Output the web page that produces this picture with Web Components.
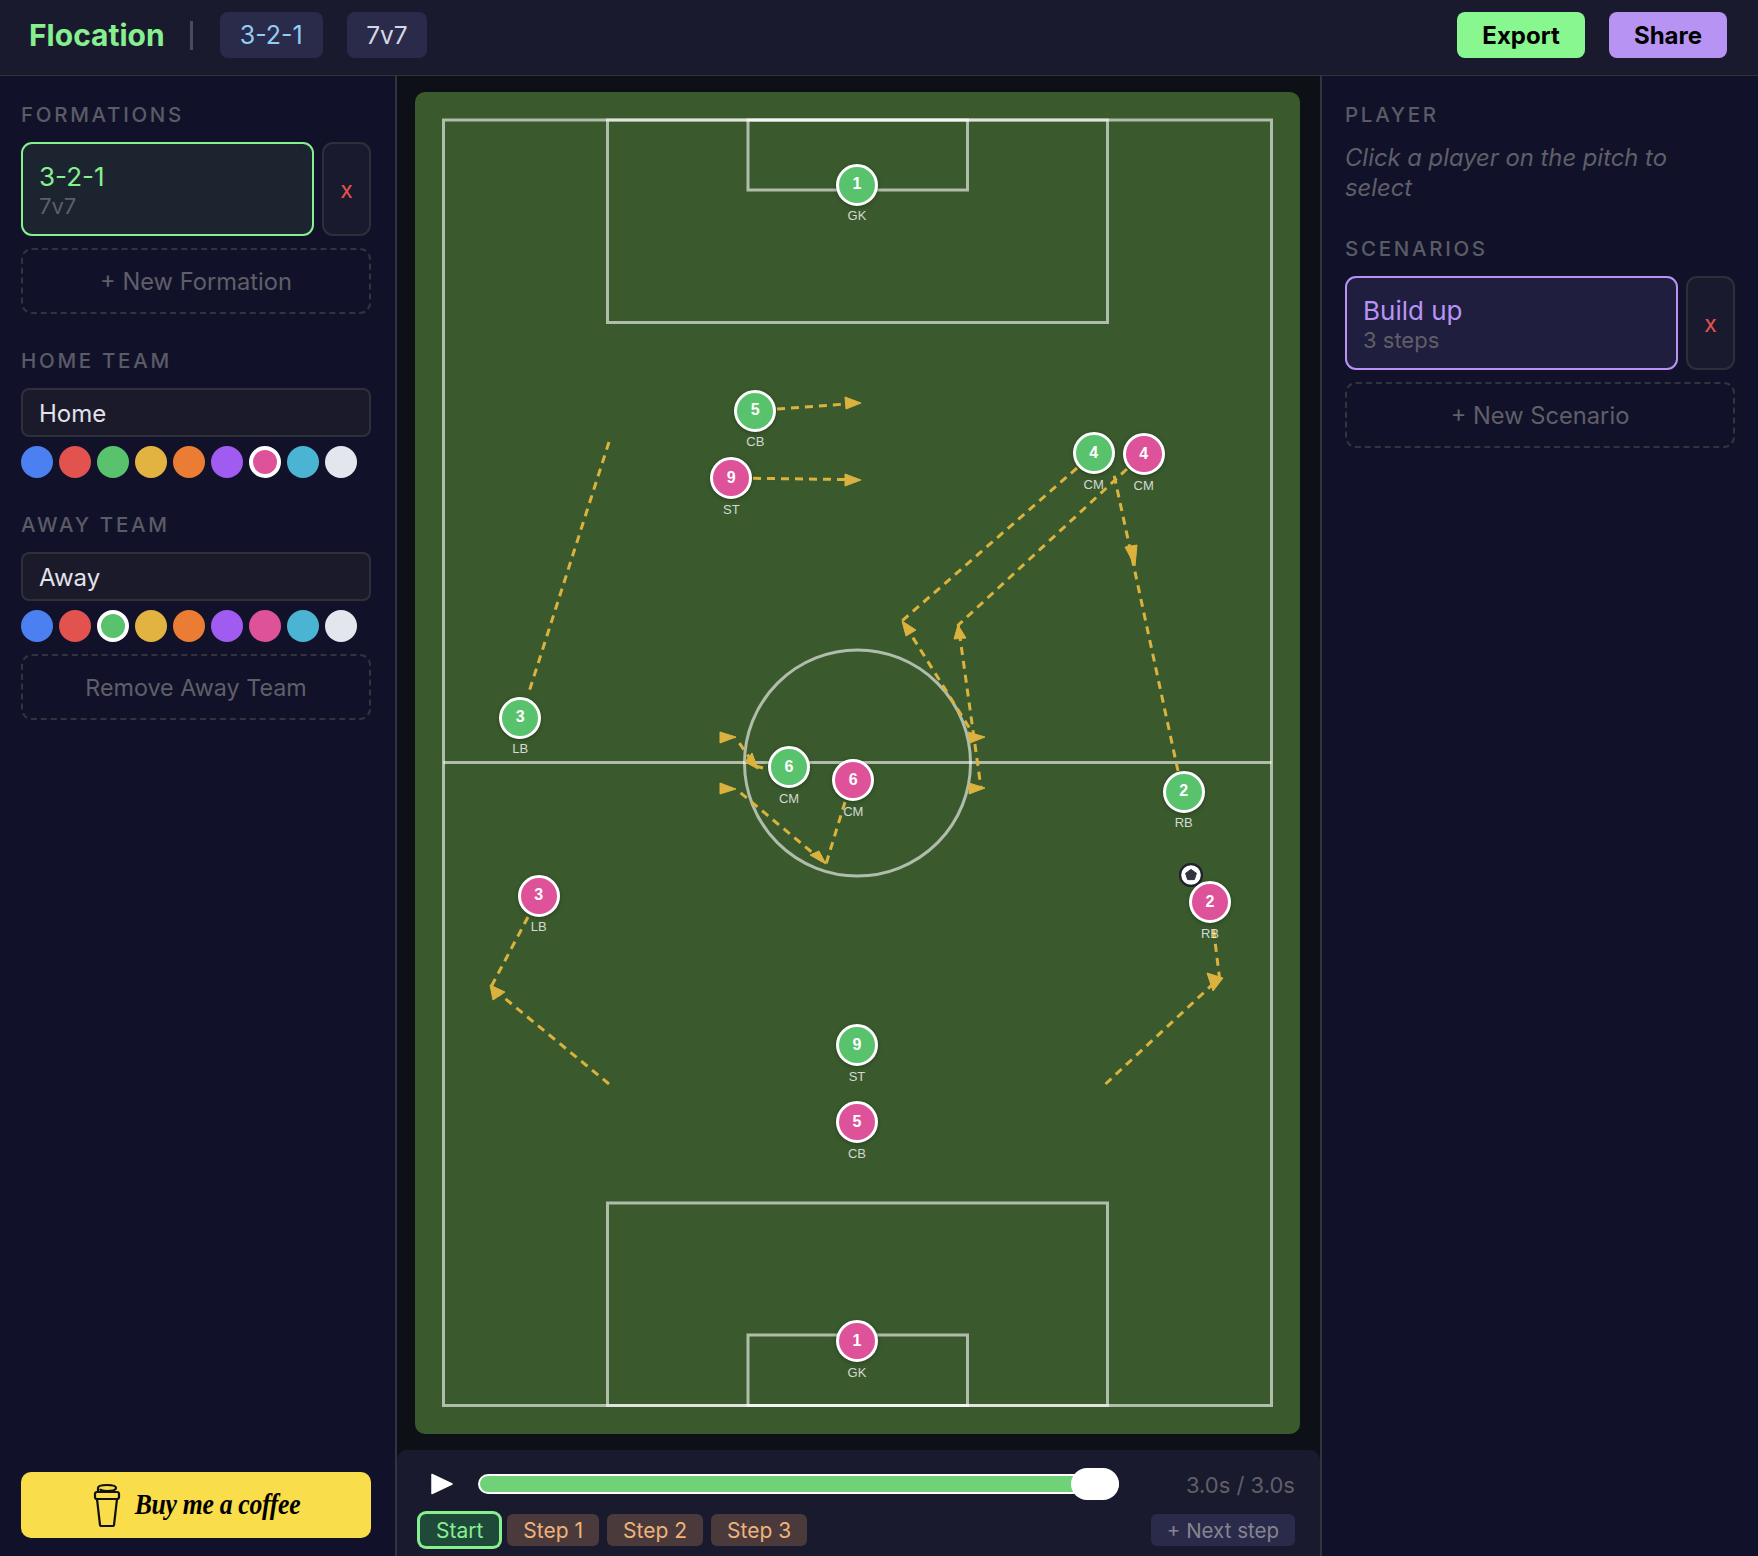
<!DOCTYPE html>
<html>
<head>
<meta charset="utf-8">
<title>Flocation</title>
<style>
  html, body { margin: 0; height: 100%; background: #0d1117; }
  body { font-family: Inter, "Liberation Sans", sans-serif; color: #e2e8f0; }
  fl-app { height: 1556px; }
  .m16 { margin-bottom: 16px; }
  .m12 { margin-bottom: 12px; }
  .m9 { margin-bottom: 9px; }
  .gap { margin-top: 36px; }
</style>
</head>
<body>
<fl-app>
  <fl-header slot="header"></fl-header>

  <fl-panel slot="left">
    <fl-label class="m16">Formations</fl-label>
    <fl-card class="m12" name="3-2-1" sub="7v7" tone="green"></fl-card>
    <fl-dashed>+ New Formation</fl-dashed>

    <fl-label class="m16 gap">Home Team</fl-label>
    <fl-name class="m9">Home</fl-name>
    <fl-swatches selected="6"></fl-swatches>

    <fl-label class="m16 gap">Away Team</fl-label>
    <fl-name class="m9">Away</fl-name>
    <fl-swatches class="m12" selected="2"></fl-swatches>
    <fl-dashed style="font-size:23.3px">Remove Away Team</fl-dashed>

    <fl-coffee></fl-coffee>
  </fl-panel>

  <fl-stage slot="center">
    <fl-pitch>
      <fl-player x="857" y="184.5" num="1" pos="GK" team="home"></fl-player>
      <fl-player x="755.3" y="410.7" num="5" pos="CB" team="home"></fl-player>
      <fl-player x="1093.7" y="453.3" num="4" pos="CM" team="home"></fl-player>
      <fl-player x="520.3" y="717.6" num="3" pos="LB" team="home"></fl-player>
      <fl-player x="789" y="767" num="6" pos="CM" team="home"></fl-player>
      <fl-player x="1183.7" y="791.7" num="2" pos="RB" team="home"></fl-player>
      <fl-player x="857" y="1045" num="9" pos="ST" team="home"></fl-player>
      <fl-ball x="1191.3" y="875"></fl-ball>
      <fl-player x="857" y="1341" num="1" pos="GK" team="away"></fl-player>
      <fl-player x="857" y="1122.3" num="5" pos="CB" team="away"></fl-player>
      <fl-player x="731.3" y="478" num="9" pos="ST" team="away"></fl-player>
      <fl-player x="1143.7" y="454.3" num="4" pos="CM" team="away"></fl-player>
      <fl-player x="538.7" y="895.8" num="3" pos="LB" team="away"></fl-player>
      <fl-player x="853.3" y="780.3" num="6" pos="CM" team="away"></fl-player>
      <fl-player x="1210" y="902.3" num="2" pos="RB" team="away"></fl-player>
    </fl-pitch>
    <fl-controls></fl-controls>
  </fl-stage>

  <fl-panel slot="right" side="right">
    <fl-label>Player</fl-label>
    <fl-hint>Click a player on the pitch to select</fl-hint>
    <fl-label class="m16">Scenarios</fl-label>
    <fl-card class="m12" name="Build up" sub="3 steps" tone="purple"></fl-card>
    <fl-dashed>+ New Scenario</fl-dashed>
  </fl-panel>
</fl-app>

<script>
// the whole page grid: header on top, then three columns
class FlApp extends HTMLElement {
  constructor() {
    super();
    this.attachShadow({ mode: "open" });
    this.shadowRoot.innerHTML = `
      <style>
        :host { display: grid; grid-template-columns: 397px 1fr 438px; grid-template-rows: 76px 1fr; }
        .top { grid-column: 1 / 4; }
      </style>
      <div class="top"><slot name="header"></slot></div>
      <slot name="left"></slot>
      <slot name="center"></slot>
      <slot name="right"></slot>`;
  }
}

class FlHeader extends HTMLElement {
  constructor() {
    super();
    this.attachShadow({ mode: "open" });
    this.shadowRoot.innerHTML = `
      <style>
        :host { display: flex; align-items: center; height: 76px; box-sizing: border-box; padding: 0 31px 5px 29px;
          background: #1a1a2e; border-bottom: 1px solid #333; font-family: Inter, sans-serif; }
        .logo { font-size: 30px; font-weight: 700; color: #86ef8e; }
        .sep { width: 3px; height: 29px; background: #4a4a58; margin: 0 27px 0 25px; }
        .pill { height: 46px; display: flex; align-items: center; padding: 0 20px; background: #2a2a4a; border-radius: 8px;
          font-size: 25px; color: #d5d8e2; margin-right: 24px; }
        .pill.on { color: #90cdf4; }
        .pill.small { padding: 0 19.5px; font-size: 24.5px; }
        .grow { flex: 1; }
        button { height: 46px; border: 0; border-radius: 8px; font: 700 24px Inter, sans-serif; color: #000; padding: 0; }
        .export { width: 128px; background: #88f78f; margin-right: 24px; }
        .share { width: 118px; background: #b794f4; }
      </style>
      <span class="logo">Flocation</span>
      <span class="sep"></span>
      <span class="pill on">3-2-1</span>
      <span class="pill small">7v7</span>
      <span class="grow"></span>
      <button class="export">Export</button>
      <button class="share">Share</button>`;
  }
}

// side column, the right one only has different padding and border
class FlPanel extends HTMLElement {
  constructor() {
    super();
    this.attachShadow({ mode: "open" });
    this.shadowRoot.innerHTML = `
      <style>
        :host { display: flex; flex-direction: column; box-sizing: border-box; height: 1480px; padding: 28px 24px 18px 21px;
          background: #11122a; border-right: 2px solid #333340; }
        :host([side="right"]) { padding: 28px 23px 18px 23px; border-right: 0; border-left: 2px solid #333340; }
      </style>
      <slot></slot>`;
  }
}

class FlLabel extends HTMLElement {
  constructor() {
    super();
    this.attachShadow({ mode: "open" });
    this.shadowRoot.innerHTML = `
      <style>
        :host { display: block; font: 500 20.5px/22px Inter, sans-serif; letter-spacing: 2.7px; text-transform: uppercase; color: #5b5b66; }
      </style>
      <slot></slot>`;
  }
}

class FlHint extends HTMLElement {
  constructor() {
    super();
    this.attachShadow({ mode: "open" });
    this.shadowRoot.innerHTML = `
      <style>
        :host { display: block; font: italic 400 23.8px/30px Inter, sans-serif; color: #5f5f68; margin: 17px 0 35px; }
      </style>
      <slot></slot>`;
  }
}

class FlCard extends HTMLElement {
  constructor() {
    super();
    this.attachShadow({ mode: "open" });
    this.shadowRoot.innerHTML = `
      <style>
        :host { display: flex; gap: 8px; height: 94px; font-family: Inter, sans-serif; }
        .card { flex: 1; box-sizing: border-box; border: 2px solid #86ef8e; border-radius: 11px; background: #1c2430; padding: 17px 16px 0; }
        :host([tone="purple"]) .card { border-color: #b794f4; background: #201e3e; }
        .name { font-size: 26px; line-height: 32px; color: #86ef8e; }
        :host([tone="purple"]) .name { color: #b794f4; }
        .sub { font-size: 22px; line-height: 26px; color: #5f5f68; }
        .x { width: 49px; box-sizing: border-box; border: 2px solid #2f2f3a; border-radius: 11px; background: #1a1a2e;
          display: flex; align-items: center; justify-content: center; color: #e2524e; font-size: 23px; padding-top: 2px; }
      </style>
      <div class="card"><div class="name"></div><div class="sub"></div></div>
      <div class="x">x</div>`;
  }

  connectedCallback() {
    this.shadowRoot.querySelector(".name").textContent = this.getAttribute("name");
    this.shadowRoot.querySelector(".sub").textContent = this.getAttribute("sub");
  }
}

class FlDashed extends HTMLElement {
  constructor() {
    super();
    this.attachShadow({ mode: "open" });
    this.shadowRoot.innerHTML = `
      <style>
        :host { display: flex; align-items: center; justify-content: center; box-sizing: border-box; height: 66px;
          border: 2px dashed #33333f; border-radius: 11px; font: 400 23.7px Inter, sans-serif; color: #5f5f68; }
      </style>
      <slot></slot>`;
  }
}

class FlName extends HTMLElement {
  constructor() {
    super();
    this.attachShadow({ mode: "open" });
    this.shadowRoot.innerHTML = `
      <style>
        :host { display: flex; align-items: center; box-sizing: border-box; height: 49px; padding: 1px 16px 0;
          background: #1a1a2b; border: 2px solid #303039; border-radius: 8px; font: 400 24px Inter, sans-serif; color: #e2e2ea; }
      </style>
      <slot></slot>`;
  }
}

class FlSwatches extends HTMLElement {
  constructor() {
    super();
    this.attachShadow({ mode: "open" });
    const colors = ["#4c80f0", "#e2524e", "#59c26c", "#e3b341", "#ea7d33", "#a05bf0", "#dd5299", "#4bb4d2", "#e4e6ee"];
    const selected = Number(this.getAttribute("selected"));
    const dots = colors.map((c, i) =>
      `<span class="dot${i === selected ? " on" : ""}" style="background:${c}"></span>`).join("");
    this.shadowRoot.innerHTML = `
      <style>
        :host { display: flex; gap: 6px; }
        .dot { width: 32px; height: 32px; box-sizing: border-box; border-radius: 50%; }
        .on { border: 4px solid #fff; }
      </style>
      ${dots}`;
  }
}

class FlCoffee extends HTMLElement {
  constructor() {
    super();
    this.attachShadow({ mode: "open" });
    this.shadowRoot.innerHTML = `
      <style>
        :host { display: flex; align-items: center; justify-content: center; gap: 13px; height: 66px; margin-top: auto;
          background: #f9dd4a; border-radius: 10px; }
        span { font: italic 700 25.7px "Liberation Serif", serif; color: #000; letter-spacing: -0.3px; transform: scaleY(1.12); }
        svg { display: block; }
      </style>
      <svg width="30" height="44" viewBox="0 0 30 44" fill="none" stroke="#111" stroke-width="2.2" stroke-linejoin="round">
        <path d="M5 16 L8 42 Q8 43 9.5 43 H20.5 Q22 43 22 42 L25 16"/>
        <path d="M3 11 Q3 9 5 9 H25 Q27 9 27 11 V14 Q27 16 25 16 H5 Q3 16 3 14 Z"/>
        <path d="M6 9 V5 Q6 2 15 2 Q24 2 24 5 Q24 8 15 8 Q9 8 8 6"/>
      </svg>
      <span>Buy me a coffee</span>`;
  }
}

// column between the side panels, pitch over the player bar
class FlStage extends HTMLElement {
  constructor() {
    super();
    this.attachShadow({ mode: "open" });
    this.shadowRoot.innerHTML = `
      <style>
        :host { display: flex; flex-direction: column; gap: 16px; padding-top: 16px; background: #0d1117; }
      </style>
      <slot></slot>`;
  }
}

// all numbers below are page pixels, the svg viewBox starts at the pitch corner
const PITCH_X = 415;
const PITCH_Y = 92;

const RUNS = [
  [[777, 409], [846, 404]],
  [[753, 478.3], [846, 479.5]],
  [[609, 442], [528, 695]],
  [[1178, 771], [1113, 470]],
  [[1077, 468], [902.3, 620.7], [975, 737]],
  [[1127, 469], [958.3, 625], [981, 788]],
  [[763, 768], [755, 766], [736, 738]],
  [[845, 802], [826, 864], [736, 789]],
  [[528, 917], [491, 987], [609, 1084]],
  [[1105.5, 1084], [1219.5, 978], [1213, 925]],
];

const HEADS = [
  "845,397 861,403 846,409",
  "845,474 861,480 845,486",
  "1125,547 1137,545 1135,566",
  "902,621 906,636 916,630",
  "958,625 954,639 966,638",
  "968,732 970,743 985,737",
  "969,783 969,794 985,788",
  "720,732 720,743 736,737",
  "745,762 752,753 758,769",
  "720,783 720,794 736,789",
  "810,855 819,851 826,864",
  "490,985 505,992 493,1000",
  "1207,973 1223,978 1213,991",
];

class FlPitch extends HTMLElement {
  constructor() {
    super();
    this.attachShadow({ mode: "open" });
    const runs = RUNS.map(r => `<polyline points="${r.map(p => p.join(",")).join(" ")}"/>`).join("");
    const heads = HEADS.map(h => `<polygon points="${h}"/>`).join("");
    this.shadowRoot.innerHTML = `
      <style>
        :host { display: block; position: relative; height: 1342px; margin: 0 20px 0 18px; background: #3a5a2d; border-radius: 10px; }
        svg { position: absolute; inset: 0; display: block; }
        .lines { fill: none; stroke: rgba(255,255,255,.6); stroke-width: 3; }
        .runs { fill: none; stroke: #dcb23f; stroke-width: 3; stroke-dasharray: 8 6; }
        .heads { fill: #dcb23f; stroke: #dcb23f; stroke-width: 1; stroke-linejoin: round; }
      </style>
      <svg width="885" height="1342" viewBox="${PITCH_X} ${PITCH_Y} 885 1342">
        <g class="lines">
          <rect x="443.5" y="120" width="828" height="1285.5"/>
          <line x1="443.5" y1="762.5" x2="1271.5" y2="762.5"/>
          <circle cx="857.5" cy="763" r="113"/>
          <rect x="607.5" y="120" width="500" height="202.5"/>
          <rect x="748" y="120" width="219.5" height="70"/>
          <rect x="607.5" y="1203" width="500" height="202.5"/>
          <rect x="748" y="1335" width="219.5" height="70.5"/>
        </g>
        <g class="runs">${runs}</g>
        <g class="heads">${heads}</g>
      </svg>
      <slot></slot>`;
  }
}

class FlPlayer extends HTMLElement {
  constructor() {
    super();
    this.attachShadow({ mode: "open" });
    this.shadowRoot.innerHTML = `
      <style>
        :host { position: absolute; width: 60px; margin-left: -30px; margin-top: -21px; display: flex; flex-direction: column; align-items: center; }
        .disc { width: 42px; height: 42px; box-sizing: border-box; border-radius: 50%; border: 3px solid #fff; background: #59c26c; padding-bottom: 1px;
          display: flex; align-items: center; justify-content: center; font: 700 16px "Liberation Sans", sans-serif; color: #fff;
          box-shadow: 0 1px 4px rgba(0,0,0,.3); }
        :host([team="away"]) .disc { background: #dd5299; }
        .pos { font: 400 13px/15px "Liberation Sans", sans-serif; color: rgba(255,255,255,.78); margin-top: 2.5px; }
      </style>
      <div class="disc"></div>
      <div class="pos"></div>`;
  }

  connectedCallback() {
    this.style.left = (this.getAttribute("x") - PITCH_X) + "px";
    this.style.top = (this.getAttribute("y") - PITCH_Y) + "px";
    this.shadowRoot.querySelector(".disc").textContent = this.getAttribute("num");
    this.shadowRoot.querySelector(".pos").textContent = this.getAttribute("pos");
  }
}

class FlBall extends HTMLElement {
  constructor() {
    super();
    this.attachShadow({ mode: "open" });
    this.shadowRoot.innerHTML = `
      <style>
        :host { position: absolute; width: 24px; height: 24px; margin: -12px 0 0 -12px; }
        svg { display: block; }
      </style>
      <svg width="24" height="24" viewBox="0 0 24 24">
        <circle cx="12" cy="12" r="11" fill="#fff" stroke="#22222c" stroke-width="2.4"/>
        <polygon points="12,6.4 17.4,10.3 15.4,16.6 8.6,16.6 6.6,10.3" fill="#33333d" stroke="#33333d" stroke-width="1" stroke-linejoin="round"/>
      </svg>`;
  }

  connectedCallback() {
    this.style.left = (this.getAttribute("x") - PITCH_X) + "px";
    this.style.top = (this.getAttribute("y") - PITCH_Y) + "px";
  }
}

class FlControls extends HTMLElement {
  constructor() {
    super();
    this.attachShadow({ mode: "open" });
    this.shadowRoot.innerHTML = `
      <style>
        :host { display: flex; flex-direction: column; gap: 14px; box-sizing: border-box; height: 106px; padding: 18px 25px 0 23px;
          background: #1a1a2e; border-radius: 10px 10px 0 0; font-family: Inter, sans-serif; }
        .row { display: flex; align-items: center; height: 32px; }
        .play { display: block; margin-left: 11px; margin-right: 25px; }
        .slider { position: relative; width: 641px; height: 32px; display: flex; align-items: center; }
        .track { width: 100%; height: 20px; box-sizing: border-box; border: 2px solid #fff; border-radius: 10px; background: #6fd278; }
        .thumb { position: absolute; right: 0; top: 0; width: 48px; height: 32px; border-radius: 16px; background: #fff; }
        .time { margin-left: auto; padding-top: 2px; font-size: 22px; color: #5f5f68; }
        .step { height: 32px; display: flex; align-items: center; padding: 0 16px; margin-right: 8px; border-radius: 6px;
          background: #4a3a3c; color: #f0b27a; font-size: 21px; }
        .step.start { background: #1f4a3a; color: #86ef8e; box-shadow: 0 0 0 3px #86ef8e; }
        .next { margin-left: auto; margin-right: 0; background: #2a2a4a; color: #85858f; font-size: 20.5px; }
      </style>
      <div class="row">
        <svg class="play" width="22" height="22" viewBox="0 0 22 22">
          <path d="M1 1.5 L21 11 L1 20.5 Z" fill="#fff" stroke="#fff" stroke-width="1.5" stroke-linejoin="round"/>
        </svg>
        <div class="slider"><div class="track"></div><div class="thumb"></div></div>
        <span class="time">3.0s / 3.0s</span>
      </div>
      <div class="row">
        <span class="step start">Start</span>
        <span class="step">Step 1</span>
        <span class="step">Step 2</span>
        <span class="step">Step 3</span>
        <span class="step next">+ Next step</span>
      </div>`;
  }
}

customElements.define("fl-app", FlApp);
customElements.define("fl-header", FlHeader);
customElements.define("fl-panel", FlPanel);
customElements.define("fl-label", FlLabel);
customElements.define("fl-hint", FlHint);
customElements.define("fl-card", FlCard);
customElements.define("fl-dashed", FlDashed);
customElements.define("fl-name", FlName);
customElements.define("fl-swatches", FlSwatches);
customElements.define("fl-coffee", FlCoffee);
customElements.define("fl-stage", FlStage);
customElements.define("fl-pitch", FlPitch);
customElements.define("fl-player", FlPlayer);
customElements.define("fl-ball", FlBall);
customElements.define("fl-controls", FlControls);
</script>
</body>
</html>
